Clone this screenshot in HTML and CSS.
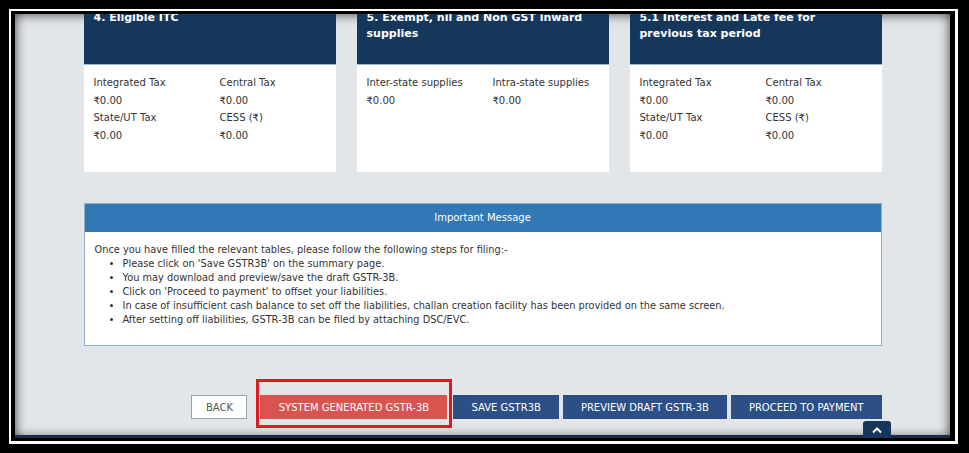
FILE: index.html
```html
<!DOCTYPE html>
<html lang="en">
<head>
    <meta charset="UTF-8">
    <meta name="viewport" content="width=device-width, initial-scale=1.0">
    <title>GSTR-3B Summary</title>
    <link rel="stylesheet" href="styles.css">
</head>
<body>
    <div class="frame">
    <div class="screen">
        <div class="page">

            <!-- summary tiles -->
            <div class="tiles">
                <div class="tile">
                    <div class="tile-head">
                        <h3>4. Eligible ITC</h3>
                    </div>
                    <div class="tile-body">
                        <div class="field"><span>Integrated Tax</span><span>₹0.00</span></div>
                        <div class="field"><span>Central Tax</span><span>₹0.00</span></div>
                        <div class="field"><span>State/UT Tax</span><span>₹0.00</span></div>
                        <div class="field"><span>CESS (₹)</span><span>₹0.00</span></div>
                    </div>
                </div>
                <div class="tile">
                    <div class="tile-head">
                        <h3>5. Exempt, nil and Non GST inward<br>supplies</h3>
                    </div>
                    <div class="tile-body">
                        <div class="field"><span>Inter-state supplies</span><span>₹0.00</span></div>
                        <div class="field"><span>Intra-state supplies</span><span>₹0.00</span></div>
                    </div>
                </div>
                <div class="tile">
                    <div class="tile-head">
                        <h3>5.1 Interest and Late fee for<br>previous tax period</h3>
                    </div>
                    <div class="tile-body">
                        <div class="field"><span>Integrated Tax</span><span>₹0.00</span></div>
                        <div class="field"><span>Central Tax</span><span>₹0.00</span></div>
                        <div class="field"><span>State/UT Tax</span><span>₹0.00</span></div>
                        <div class="field"><span>CESS (₹)</span><span>₹0.00</span></div>
                    </div>
                </div>
            </div>

            <!-- message -->
            <div class="panel">
                <div class="panel-head">Important Message</div>
                <div class="panel-body">
                    <p>Once you have filled the relevant tables, please follow the following steps for filing:-</p>
                    <ul>
                        <li>Please click on 'Save GSTR3B' on the summary page.</li>
                        <li>You may download and preview/save the draft GSTR-3B.</li>
                        <li>Click on 'Proceed to payment' to offset your liabilities.</li>
                        <li>In case of insufficient cash balance to set off the liabilities, challan creation facility has been provided on the same screen.</li>
                        <li>After setting off liabilities, GSTR-3B can be filed by attaching DSC/EVC.</li>
                    </ul>
                </div>
            </div>

            <!-- actions -->
            <div class="actions">
                <button class="btn btn-default">BACK</button>
                <button class="btn btn-danger marked">SYSTEM GENERATED GSTR-3B</button>
                <button class="btn btn-primary">SAVE GSTR3B</button>
                <button class="btn btn-primary">PREVIEW DRAFT GSTR-3B</button>
                <button class="btn btn-primary">PROCEED TO PAYMENT</button>
            </div>
        </div>

        <div class="footer-line"></div>
        <a class="back-top" href="#">
            <svg width="12" height="8" viewBox="0 0 12 8"><path d="M2 6.5 L6 2.5 L10 6.5" fill="none" stroke="#fff" stroke-width="2"/></svg>
        </a>
    </div>
    </div>
</body>
</html>
```

FILE: styles.css
```css
html, body {
    margin: 0;
    padding: 0;
    background: #000;
    height: 100%;
}

body {
    font-family: 'DejaVu Sans', Verdana, sans-serif;
    font-size: 10px;
    color: #333;
    overflow: hidden;
}

.frame {
    margin: 9px 0 0 9px;
    width: 949px;
    height: 435px;
    box-sizing: border-box;
    border-style: solid;
    border-color: #fff;
    border-width: 2px 3px 3px 2px;
    padding: 3px 5px 3px 4px;
    background: #000;
}

.screen {
    position: relative;
    height: 100%;
    background: #e3e6e9;
    box-shadow: inset 0 0 12px rgba(0, 0, 0, 0.75);
    overflow: hidden;
    display: flex;
    flex-direction: column;
}

.page {
    width: 798px;
    margin: 0 auto;
}

/* tiles */
.tiles {
    display: grid;
    grid-template-columns: repeat(3, 252px);
    column-gap: 21px;
    margin-top: -6px;
}

.tile-head {
    background: #16375c;
    height: 57px;
    padding: 2px 10px 0;
    box-sizing: border-box;
    border-bottom: 1px solid #9fb6cf;
}

.tile-head h3 {
    margin: 0;
    color: #fff;
    font-size: 11px;
    font-weight: bold;
    line-height: 16px;
    white-space: nowrap;
}

.tile-body {
    background: #fff;
    height: 107px;
    padding: 9px 10px 0;
    box-sizing: border-box;
    display: grid;
    grid-template-columns: 126px 1fr;
    align-content: start;
}

.field span {
    display: block;
    line-height: 17.5px;
}

/* message panel */
.panel {
    margin-top: 31px;
    border: 1px solid #8fb1d1;
    background: #fff;
}

.panel-head {
    background: #3278b4;
    color: #fff;
    text-align: center;
    height: 28px;
    line-height: 28px;
}

.panel-body {
    padding: 11px 10px 18px;
    font-size: 9.8px;
    line-height: 14px;
}

.panel-body p {
    margin: 0;
}

.panel-body ul {
    margin: 0;
    padding-left: 28px;
}

/* buttons */
.actions {
    display: flex;
    justify-content: flex-end;
    margin-top: 49px;
}

.btn {
    position: relative;
    font-family: inherit;
    font-size: 10px;
    height: 24px;
    padding: 0 17px;
    border: 1px solid transparent;
    margin-left: 4px;
    white-space: nowrap;
    cursor: pointer;
}

.btn-default {
    background: #fff;
    color: #555;
    border-color: #9aa3ad;
    width: 56px;
    padding: 0;
}

.btn-primary {
    background: #2c4f86;
    color: #fff;
}

.btn-danger {
    background: #d9534f;
    color: #fff;
    width: 187px;
    padding: 0;
    margin: 0 2px 0 13px;
}

.marked::after {
    content: '';
    position: absolute;
    top: -17px;
    bottom: -10px;
    left: -5px;
    right: -6px;
    border: 3px solid #e3161f;
}

.footer-line {
    margin-top: auto;
    height: 3px;
    background: #1a2b48;
}

.back-top {
    position: absolute;
    right: 59px;
    bottom: 0;
    width: 28px;
    height: 17px;
    background: #16375c;
    border-radius: 3px 3px 0 0;
    display: flex;
    align-items: center;
    justify-content: center;
}
```
